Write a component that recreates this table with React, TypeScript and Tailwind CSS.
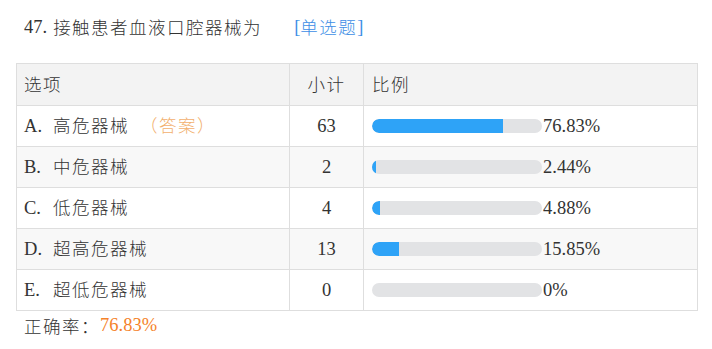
import React from "react";

// Single-choice question stats table

interface Row {
  key: string;
  label: string;
  count: number;
  pct: number;
  answer?: boolean;
}

const rows: Row[] = [
  { key: "A", label: "高危器械", count: 63, pct: 76.83, answer: true },
  { key: "B", label: "中危器械", count: 2, pct: 2.44 },
  { key: "C", label: "低危器械", count: 4, pct: 4.88 },
  { key: "D", label: "超高危器械", count: 13, pct: 15.85 },
  { key: "E", label: "超低危器械", count: 0, pct: 0 },
];

function Z({ children, className = "" }: { children: React.ReactNode; className?: string }) {
  return (
    <span
      className={`text-[17.5px] tracking-[1.5px] font-light ${className}`}
      style={{ fontFamily: '"Noto Sans CJK SC", sans-serif' }}
    >
      {children}
    </span>
  );
}

function fmt(p: number) {
  return p === 0 ? "0%" : `${p.toFixed(2)}%`;
}

export default function App() {
  return (
    <div
      className="w-[712px] h-[349px] bg-white text-[#333] text-[18.5px] leading-none"
      style={{ fontFamily: '"Liberation Serif", "Noto Sans CJK SC", serif' }}
    >
      <div className="pt-[17px] pl-[24px] h-[63px] flex items-start">
        <span className="h-[20px] flex items-center">
          47<span className="mr-[6px]">.</span>
          <Z>接触患者血液口腔器械为</Z>
        </span>
        <span className="ml-[32px] h-[20px] flex items-center text-[#3d8ee6]">
          [<Z>单选题</Z>]
        </span>
      </div>

      <table className="ml-[16px] w-[682px] border-collapse border border-[#dedede]">
        <thead>
          <tr className="h-[42px] bg-[#f3f3f3]">
            <th className="w-[273px] border border-[#dedede] pl-[7px] text-left font-normal">
              <Z>选项</Z>
            </th>
            <th className="w-[74px] border border-[#dedede] text-center font-normal">
              <Z>小计</Z>
            </th>
            <th className="border border-[#dedede] pl-[8px] text-left font-normal">
              <Z>比例</Z>
            </th>
          </tr>
        </thead>
        <tbody>
          {rows.map((r, i) => (
            <tr key={r.key} className={`h-[41px] ${i % 2 === 1 ? "bg-[#f8f8f8]" : "bg-white"}`}>
              <td className="border border-[#dedede] pl-[7px]">
                <span className="inline-block w-[29px]">{r.key}.</span>
                <Z>{r.label}</Z>
                {r.answer && <Z className="ml-[11px] text-[#f2b06e]">（答案）</Z>}
              </td>
              <td className="border border-[#dedede] text-center">{r.count}</td>
              <td className="border border-[#dedede] pl-[8px]">
                <div className="flex items-center">
                  <div className="w-[170px] h-[14px] rounded-full bg-[#e2e3e5] overflow-hidden">
                    <div
                      className="h-full bg-[#2ea3f7] rounded-l-full"
                      style={{ width: `${r.pct}%` }}
                    />
                  </div>
                  <span className="ml-[1px]">{fmt(r.pct)}</span>
                </div>
              </td>
            </tr>
          ))}
        </tbody>
      </table>

      <div className="pl-[24px] pt-[5px] flex items-center">
        <Z>正确率：</Z>
        <span className="text-[#f5822a]">76.83%</span>
      </div>
    </div>
  );
}
